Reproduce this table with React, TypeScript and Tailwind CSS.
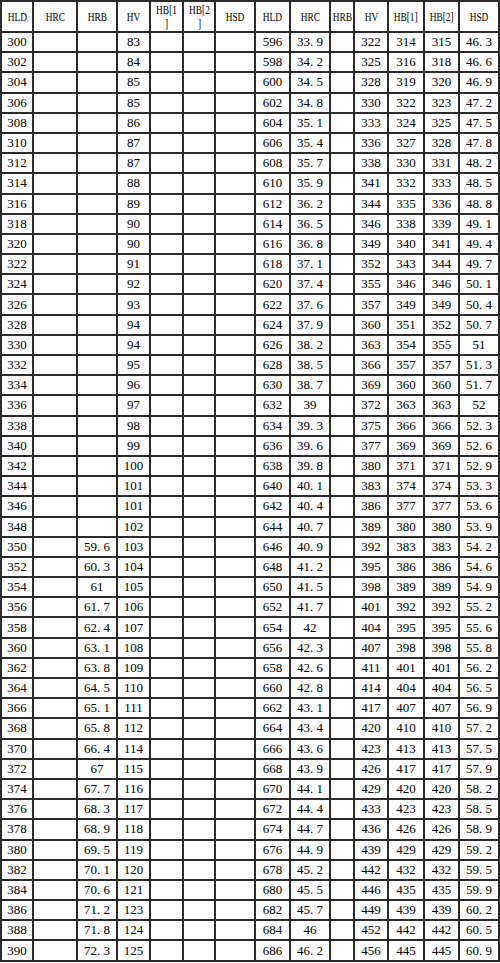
type Row = [string, string, string, string, string, string, string];

const left: Row[] = [
  ["300", "", "", "83", "", "", ""],
  ["302", "", "", "84", "", "", ""],
  ["304", "", "", "85", "", "", ""],
  ["306", "", "", "85", "", "", ""],
  ["308", "", "", "86", "", "", ""],
  ["310", "", "", "87", "", "", ""],
  ["312", "", "", "87", "", "", ""],
  ["314", "", "", "88", "", "", ""],
  ["316", "", "", "89", "", "", ""],
  ["318", "", "", "90", "", "", ""],
  ["320", "", "", "90", "", "", ""],
  ["322", "", "", "91", "", "", ""],
  ["324", "", "", "92", "", "", ""],
  ["326", "", "", "93", "", "", ""],
  ["328", "", "", "94", "", "", ""],
  ["330", "", "", "94", "", "", ""],
  ["332", "", "", "95", "", "", ""],
  ["334", "", "", "96", "", "", ""],
  ["336", "", "", "97", "", "", ""],
  ["338", "", "", "98", "", "", ""],
  ["340", "", "", "99", "", "", ""],
  ["342", "", "", "100", "", "", ""],
  ["344", "", "", "101", "", "", ""],
  ["346", "", "", "101", "", "", ""],
  ["348", "", "", "102", "", "", ""],
  ["350", "", "59.6", "103", "", "", ""],
  ["352", "", "60.3", "104", "", "", ""],
  ["354", "", "61", "105", "", "", ""],
  ["356", "", "61.7", "106", "", "", ""],
  ["358", "", "62.4", "107", "", "", ""],
  ["360", "", "63.1", "108", "", "", ""],
  ["362", "", "63.8", "109", "", "", ""],
  ["364", "", "64.5", "110", "", "", ""],
  ["366", "", "65.1", "111", "", "", ""],
  ["368", "", "65.8", "112", "", "", ""],
  ["370", "", "66.4", "114", "", "", ""],
  ["372", "", "67", "115", "", "", ""],
  ["374", "", "67.7", "116", "", "", ""],
  ["376", "", "68.3", "117", "", "", ""],
  ["378", "", "68.9", "118", "", "", ""],
  ["380", "", "69.5", "119", "", "", ""],
  ["382", "", "70.1", "120", "", "", ""],
  ["384", "", "70.6", "121", "", "", ""],
  ["386", "", "71.2", "123", "", "", ""],
  ["388", "", "71.8", "124", "", "", ""],
  ["390", "", "72.3", "125", "", "", ""],
];

const right: Row[] = [
  ["596", "33.9", "", "322", "314", "315", "46.3"],
  ["598", "34.2", "", "325", "316", "318", "46.6"],
  ["600", "34.5", "", "328", "319", "320", "46.9"],
  ["602", "34.8", "", "330", "322", "323", "47.2"],
  ["604", "35.1", "", "333", "324", "325", "47.5"],
  ["606", "35.4", "", "336", "327", "328", "47.8"],
  ["608", "35.7", "", "338", "330", "331", "48.2"],
  ["610", "35.9", "", "341", "332", "333", "48.5"],
  ["612", "36.2", "", "344", "335", "336", "48.8"],
  ["614", "36.5", "", "346", "338", "339", "49.1"],
  ["616", "36.8", "", "349", "340", "341", "49.4"],
  ["618", "37.1", "", "352", "343", "344", "49.7"],
  ["620", "37.4", "", "355", "346", "346", "50.1"],
  ["622", "37.6", "", "357", "349", "349", "50.4"],
  ["624", "37.9", "", "360", "351", "352", "50.7"],
  ["626", "38.2", "", "363", "354", "355", "51"],
  ["628", "38.5", "", "366", "357", "357", "51.3"],
  ["630", "38.7", "", "369", "360", "360", "51.7"],
  ["632", "39", "", "372", "363", "363", "52"],
  ["634", "39.3", "", "375", "366", "366", "52.3"],
  ["636", "39.6", "", "377", "369", "369", "52.6"],
  ["638", "39.8", "", "380", "371", "371", "52.9"],
  ["640", "40.1", "", "383", "374", "374", "53.3"],
  ["642", "40.4", "", "386", "377", "377", "53.6"],
  ["644", "40.7", "", "389", "380", "380", "53.9"],
  ["646", "40.9", "", "392", "383", "383", "54.2"],
  ["648", "41.2", "", "395", "386", "386", "54.6"],
  ["650", "41.5", "", "398", "389", "389", "54.9"],
  ["652", "41.7", "", "401", "392", "392", "55.2"],
  ["654", "42", "", "404", "395", "395", "55.6"],
  ["656", "42.3", "", "407", "398", "398", "55.8"],
  ["658", "42.6", "", "411", "401", "401", "56.2"],
  ["660", "42.8", "", "414", "404", "404", "56.5"],
  ["662", "43.1", "", "417", "407", "407", "56.9"],
  ["664", "43.4", "", "420", "410", "410", "57.2"],
  ["666", "43.6", "", "423", "413", "413", "57.5"],
  ["668", "43.9", "", "426", "417", "417", "57.9"],
  ["670", "44.1", "", "429", "420", "420", "58.2"],
  ["672", "44.4", "", "433", "423", "423", "58.5"],
  ["674", "44.7", "", "436", "426", "426", "58.9"],
  ["676", "44.9", "", "439", "429", "429", "59.2"],
  ["678", "45.2", "", "442", "432", "432", "59.5"],
  ["680", "45.5", "", "446", "435", "435", "59.9"],
  ["682", "45.7", "", "449", "439", "439", "60.2"],
  ["684", "46", "", "452", "442", "442", "60.5"],
  ["686", "46.2", "", "456", "445", "445", "60.9"],
];

// column widths, left half then right half
const widths = [32, 44, 40, 33, 33, 32, 40, 35, 40, 24, 34, 36, 35, 40];

const headRight = ["HLD", "HRC", "HRB", "HV", "HB[1]", "HB[2]", "HSD"];

// SimSun-style number: the half-width dot keeps a whole cell
function Num({ v }: { v: string }) {
  if (!v.includes(".")) return <>{v}</>;
  const [a, b] = v.split(".");
  return (
    <>
      {a}
      <span className="inline-block w-[6.5px] text-left">.</span>
      {b}
    </>
  );
}

// header letters are narrow half-width glyphs in the source table
function Head({ children }: { children: React.ReactNode }) {
  return (
    <div className="flex justify-center">
      <span className="shrink-0 scale-x-[0.72] whitespace-nowrap">{children}</span>
    </div>
  );
}

export default function App() {
  const cell = "border-2 border-[#2b2b2b] text-center align-middle p-0";
  const head = `${cell} font-normal`;
  return (
    <div className="w-[500px] h-[963px] bg-white overflow-hidden">
      <table
        className="table-fixed border-collapse w-[499px] text-[13px] leading-[14px] text-black"
        style={{ fontFamily: '"Liberation Serif", "Noto Sans CJK SC", serif' }}
      >
        <colgroup>
          {widths.map((w, i) => (
            <col key={i} style={{ width: w }} />
          ))}
        </colgroup>
        <thead>
          <tr className="h-[31px]">
            <th className={head}><Head>HLD</Head></th>
            <th className={head}><Head>HRC</Head></th>
            <th className={head}><Head>HRB</Head></th>
            <th className={head}><Head>HV</Head></th>
            <th className={head}>
              <Head>
                HB[1
                <br />]
              </Head>
            </th>
            <th className={head}>
              <Head>
                HB[2
                <br />]
              </Head>
            </th>
            <th className={head}><Head>HSD</Head></th>
            {headRight.map((h) => (
              <th key={h} className={head}>
                <Head>{h}</Head>
              </th>
            ))}
          </tr>
        </thead>
        <tbody>
          {left.map((row, i) => (
            <tr key={row[0]} className="h-[20.2px]">
              {[...row, ...right[i]].map((v, j) => (
                <td key={j} className={cell}>
                  <Num v={v} />
                </td>
              ))}
            </tr>
          ))}
        </tbody>
      </table>
    </div>
  );
}
